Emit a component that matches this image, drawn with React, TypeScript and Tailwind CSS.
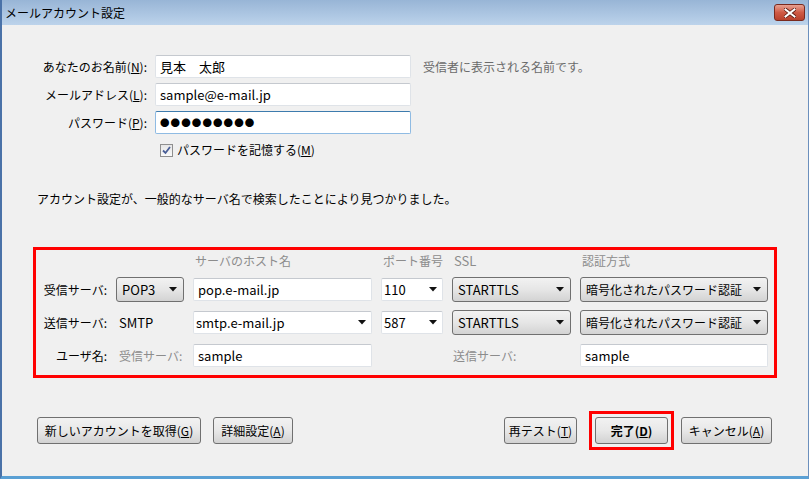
import type { ReactNode } from 'react'

const font = { fontFamily: '"Noto Sans CJK JP", "Liberation Sans", sans-serif' }

function Arrow() {
  return (
    <svg width="8" height="5" viewBox="0 0 8 5" className="shrink-0">
      <path d="M0 0h8L4 4.5z" fill="#111" />
    </svg>
  )
}

function TextBox({ value, className = '' }: { value: string; className?: string }) {
  return (
    <div
      className={`flex h-[23px] items-center whitespace-nowrap rounded-[2px] border border-[#dfe3e8] border-t-[#c5c9cf] bg-white px-[4px] text-[13px] text-black ${className}`}
    >
      {value}
    </div>
  )
}

function Combo({ value, className = '' }: { value: string; className?: string }) {
  return (
    <div
      className={`flex h-[23px] items-center justify-between whitespace-nowrap rounded-[2px] border border-[#dfe3e8] border-t-[#c5c9cf] bg-white pl-[2px] pr-[5px] text-[13px] text-black ${className}`}
    >
      <span>{value}</span>
      <Arrow />
    </div>
  )
}

function DropButton({ value, className = '' }: { value: string; className?: string }) {
  return (
    <div
      className={`flex h-[25px] items-center justify-between whitespace-nowrap rounded-[3px] border border-[#707070] bg-gradient-to-b from-[#f2f2f2] via-[#e6e6e6] to-[#d3d3d3] pl-[5px] pr-[6px] text-black ${className}`}
    >
      <span>{value}</span>
      <Arrow />
    </div>
  )
}

function Button({ children, className = '', bold = false }: { children: ReactNode; className?: string; bold?: boolean }) {
  return (
    <button
      type="button"
      className={`flex h-[27px] items-center justify-center whitespace-nowrap rounded-[3px] border border-[#707070] bg-gradient-to-b from-[#f2f2f2] via-[#e8e8e8] to-[#d2d2d2] text-[12px] text-black ${bold ? 'font-bold' : ''} ${className}`}
    >
      {children}
    </button>
  )
}

function Label({ children, className = '' }: { children: ReactNode; className?: string }) {
  return <div className={`whitespace-nowrap text-right text-[12px] text-black ${className}`}>{children}</div>
}

export default function App() {
  return (
    <div style={font} className="h-[479px] w-[810px] bg-white">
      <div className="flex h-[479px] w-[809px] flex-col border-b-[3px] border-l-2 border-r border-b-[#5aa0d4] border-l-[#4a72a8] border-r-[#6b8fbd]">
        {/* title bar */}
        <div className="flex h-[25px] shrink-0 items-center justify-between bg-gradient-to-b from-[#98b5d6] to-[#bcd3eb] pl-[3px] pr-[3px]">
          <span className="text-[12px] text-black">メールアカウント設定</span>
          <div className="flex h-[17px] w-[31px] items-center justify-center rounded-[3px] border border-[#7a2a1e] bg-gradient-to-b from-[#e7a192] via-[#cf5a45] to-[#b8402c]">
            <svg width="12" height="10" viewBox="0 0 12 10">
              <path d="M1.5 1.5L10.5 8.5M10.5 1.5L1.5 8.5" stroke="#5a1a12" strokeWidth="3.6" strokeLinecap="square" />
              <path d="M1.5 1.5L10.5 8.5M10.5 1.5L1.5 8.5" stroke="#fff" strokeWidth="2" strokeLinecap="square" />
            </svg>
          </div>
        </div>

        {/* body */}
        <div className="flex flex-1 flex-col bg-[#f0f0f0]">
          <div className="flex flex-col gap-[5px] pt-[30px]">
            <div className="flex items-center">
              <Label className="w-[145px]">
                あなたのお名前(<u>N</u>):
              </Label>
              <TextBox value="見本　太郎" className="ml-[8px] w-[256px]" />
              <span className="ml-[12px] text-[12px] text-[#6b6b6b]">受信者に表示される名前です。</span>
            </div>
            <div className="flex items-center">
              <Label className="w-[145px]">
                メールアドレス(<u>L</u>):
              </Label>
              <TextBox value="sample@e-mail.jp" className="ml-[8px] w-[256px] text-[13.5px]" />
            </div>
            <div className="flex items-center">
              <Label className="w-[145px]">
                パスワード(<u>P</u>):
              </Label>
              <div className="ml-[8px] flex h-[23px] w-[256px] items-center rounded-[2px] border border-[#8fbbe3] border-t-[#3d7bad] bg-white px-[4px] text-[9.5px] leading-none tracking-[1.1px] text-black">
                ●●●●●●●●●
              </div>
            </div>
          </div>

          <div className="ml-[158px] mt-[9px] flex items-center gap-[4px]">
            <div className="flex h-[13px] w-[13px] items-center justify-center border border-[#8f8f8f] bg-gradient-to-b from-[#e6e6e6] to-[#fafafa]">
              <svg width="9" height="9" viewBox="0 0 9 9">
                <path d="M1 4.5L3.5 7L8 1" fill="none" stroke="#4a5f97" strokeWidth="1.8" />
              </svg>
            </div>
            <span className="text-[12px] leading-[14px] text-black">
              パスワードを記憶する(<u>M</u>)
            </span>
          </div>

          <p className="ml-[35px] mt-[34px] text-[12px] leading-[16px] text-black">
            アカウント設定が、一般的なサーバ名で検索したことにより見つかりました。
          </p>

          {/* server settings */}
          <div className="ml-[31px] mt-[40px] w-[744px] border-[3px] border-[#ff0000] pb-[7px]">
            <div className="grid grid-cols-[71px_68px_179px_62px_119px_188px] grid-rows-[19px_25px_25px_25px] items-center gap-x-[9px] gap-y-[8px] text-[12px]">
              <div />
              <div />
              <div className="self-end whitespace-nowrap pl-[2px] leading-[16px] text-[#8c8c8c]">サーバのホスト名</div>
              <div className="self-end whitespace-nowrap pl-[2px] leading-[16px] text-[#8c8c8c]">ポート番号</div>
              <div className="self-end whitespace-nowrap pl-[2px] text-[13px] leading-[16px] text-[#8c8c8c]">SSL</div>
              <div className="self-end whitespace-nowrap pl-[2px] leading-[16px] text-[#8c8c8c]">認証方式</div>

              <Label>受信サーバ:</Label>
              <DropButton value="POP3" className="text-[13px]" />
              <TextBox value="pop.e-mail.jp" />
              <Combo value="110" />
              <DropButton value="STARTTLS" className="text-[13px]" />
              <DropButton value="暗号化されたパスワード認証" className="text-[12px]" />

              <Label>送信サーバ:</Label>
              <div className="pl-[3px] text-[13px] text-black">SMTP</div>
              <Combo value="smtp.e-mail.jp" />
              <Combo value="587" />
              <DropButton value="STARTTLS" className="text-[13px]" />
              <DropButton value="暗号化されたパスワード認証" className="text-[12px]" />

              <Label>ユーザ名:</Label>
              <div className="whitespace-nowrap pl-[3px] text-[#8c8c8c]">受信サーバ:</div>
              <TextBox value="sample" />
              <div />
              <div className="whitespace-nowrap pl-[1px] text-[#8c8c8c]">送信サーバ:</div>
              <TextBox value="sample" />
            </div>
          </div>

          {/* buttons */}
          <div className="mt-[33px] flex items-center pl-[35px] pr-[36px]">
            <Button className="w-[164px]">
              新しいアカウントを取得(<u>G</u>)
            </Button>
            <Button className="ml-[12px] w-[80px]">
              詳細設定(<u>A</u>)
            </Button>
            <div className="flex-1" />
            <Button className="w-[73px]">
              再テスト(<u>T</u>)
            </Button>
            <div className="ml-[12px] border-[3px] border-[#ff0000] px-[3px] py-[3px]">
              <Button bold className="w-[73px]">
                完了(<u>D</u>)
              </Button>
            </div>
            <Button className="ml-[7px] w-[91px]">
              キャンセル(<u>A</u>)
            </Button>
          </div>
        </div>
      </div>
    </div>
  )
}
